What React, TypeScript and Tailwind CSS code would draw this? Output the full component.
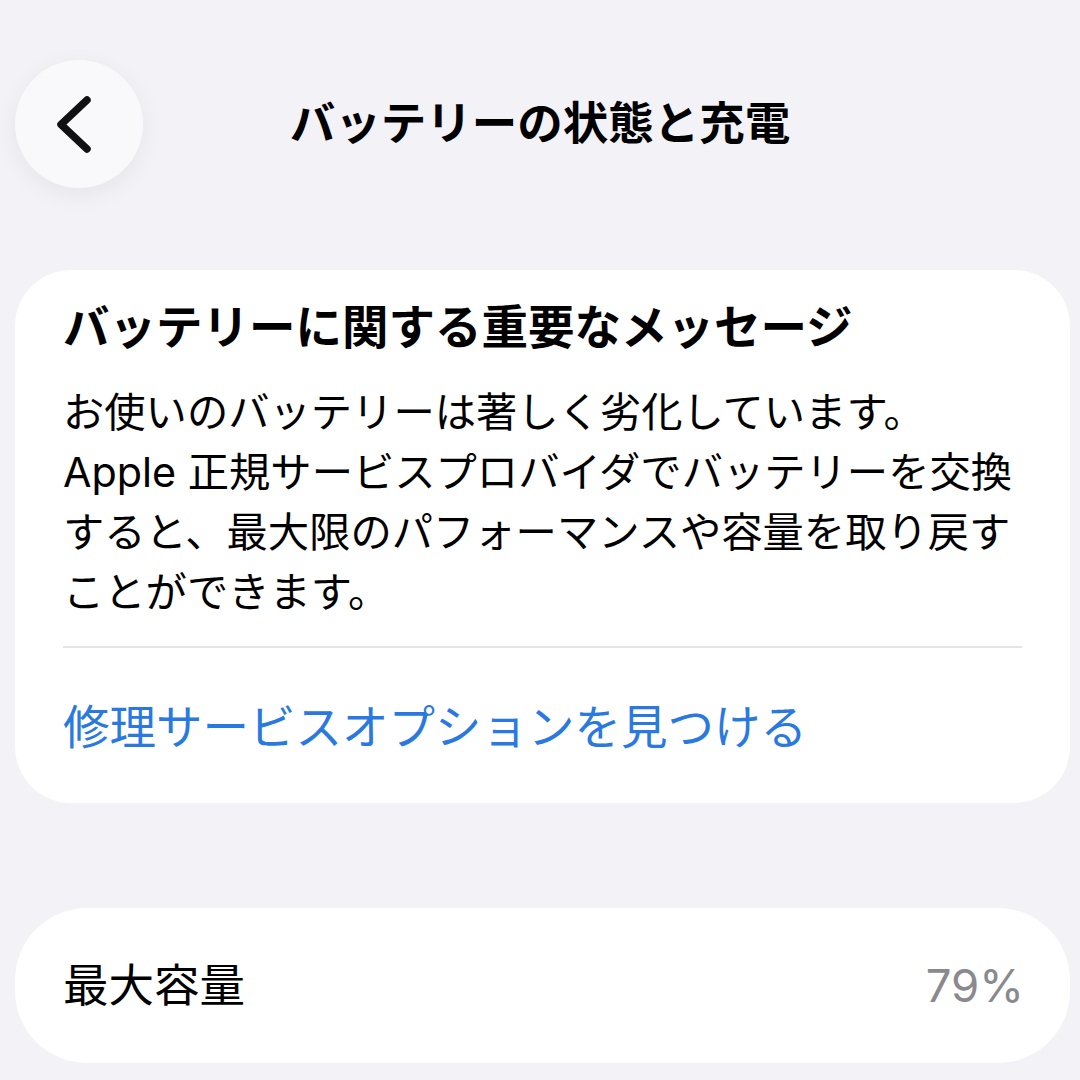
import { ChevronLeft } from 'lucide-react'

const bodyLines = [
  'お使いのバッテリーは著しく劣化しています。',
  'Apple 正規サービスプロバイダでバッテリーを交換',
  'すると、最大限のパフォーマンスや容量を取り戻す',
  'ことができます。',
]

function BackButton() {
  return (
    <button className="w-[128px] h-[128px] rounded-full bg-[#f9f9fb] shadow-[0_6px_24px_rgba(0,0,0,0.06)] flex items-center justify-center">
      <svg width="128" height="128" viewBox="0 0 128 128" fill="none">
        <path d="M72 40 L46 64.5 L72 89" stroke="#111" strokeWidth="7.5" strokeLinecap="round" strokeLinejoin="round" />
      </svg>
    </button>
  )
}

export default function App() {
  void ChevronLeft
  return (
    <div className="min-h-[1080px] w-[1080px] bg-[#f2f2f7] text-black font-['Inter','Noto_Sans_CJK_JP',sans-serif] overflow-hidden">
      <header className="pt-[60px] px-[15px] grid grid-cols-[128px_1fr_128px] items-center">
        <BackButton />
        <h1 className="text-center text-[45.5px] leading-[56px] font-bold whitespace-nowrap">バッテリーの状態と充電</h1>
        <div />
      </header>

      <section className="mt-[82px] ml-[15px] w-[1055px] bg-white rounded-[56px] pt-[29px] pb-[48px] px-[48px]">
        <h2 className="text-[46.5px] leading-[56px] font-bold whitespace-nowrap">バッテリーに関する重要なメッセージ</h2>
        <div className="mt-[27px] text-[41.3px] leading-[60px]">
          {bodyLines.map(line => (
            <div key={line} className="whitespace-nowrap">{line}</div>
          ))}
        </div>
        <div className="mt-[24px] h-[2px] bg-[#e4e4e8]" />
        <a className="block mt-[51px] text-[46.5px] leading-[56px] text-[#2a79e0] whitespace-nowrap">
          修理サービスオプションを見つける
        </a>
      </section>

      <section className="mt-[105px] ml-[15px] w-[1055px] h-[155px] bg-white rounded-[72px] pl-[48px] pr-[46px] flex items-center justify-between">
        <span className="text-[45.5px] leading-[56px]">最大容量</span>
        <span className="text-[45.5px] leading-[56px] text-[#8a8a8e]">79%</span>
      </section>
    </div>
  )
}
